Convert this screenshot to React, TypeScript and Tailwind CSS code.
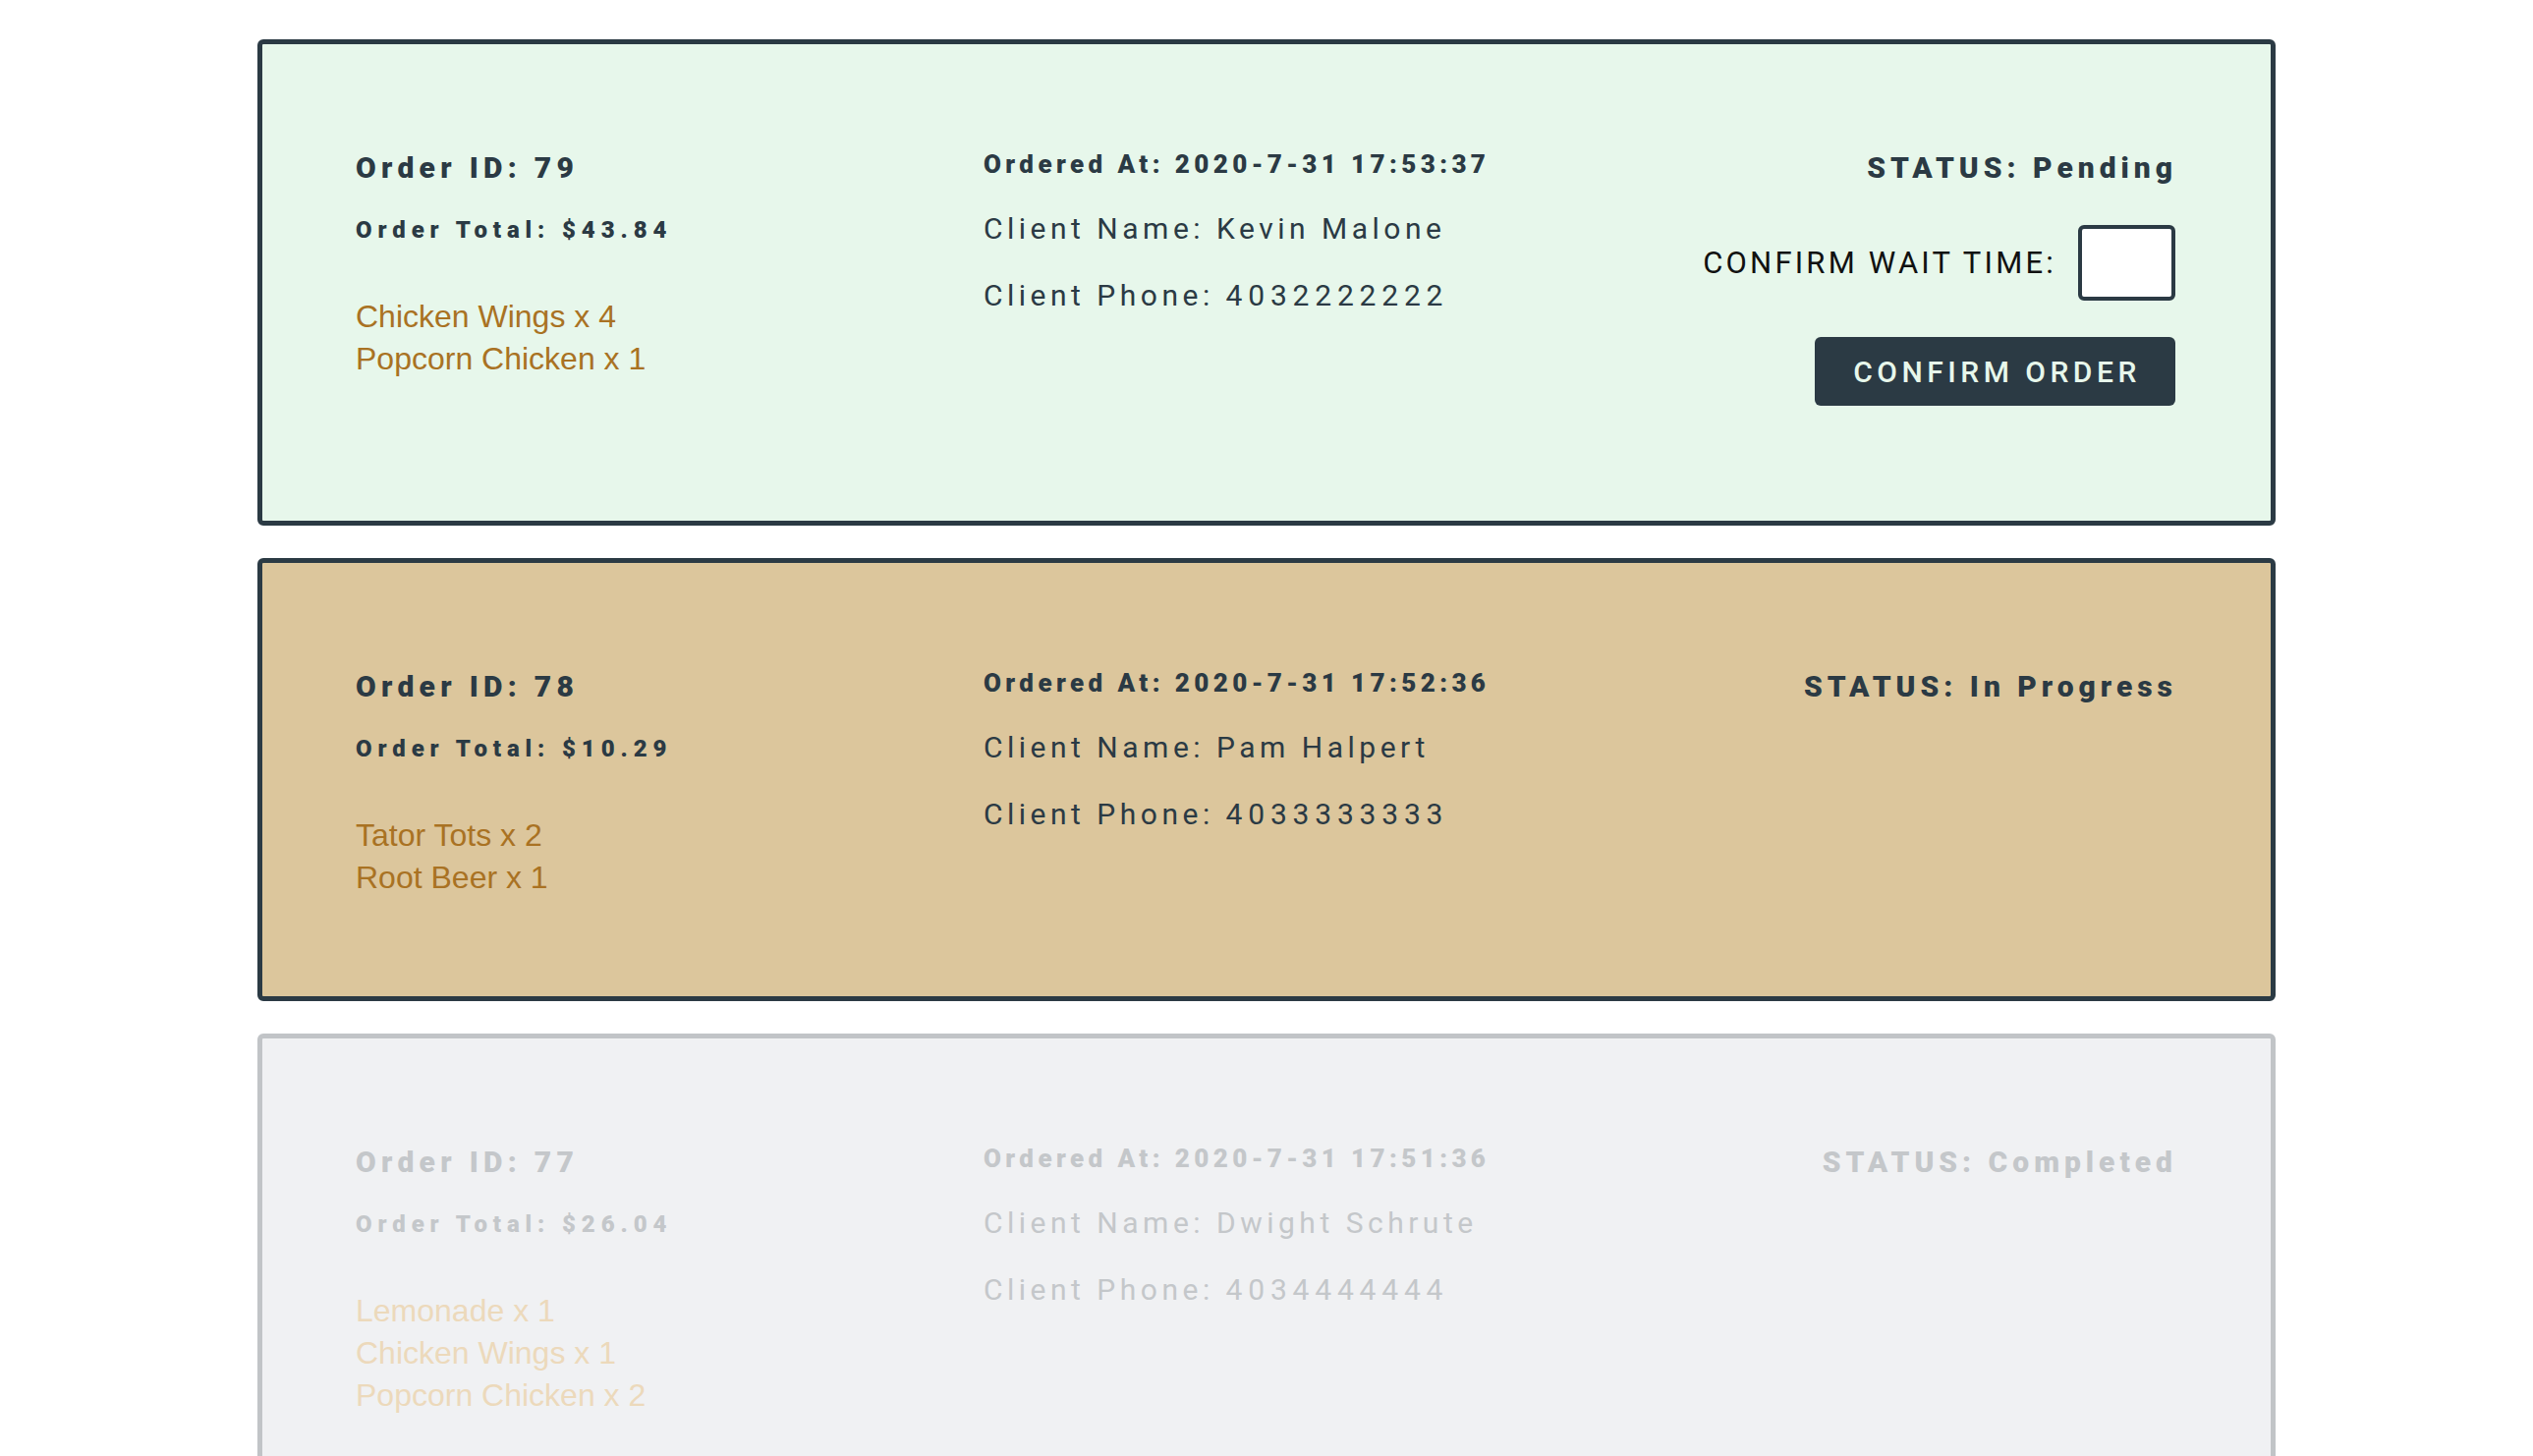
import React from "react";

type Order = {
  id: number;
  total: string;
  at: string;
  name: string;
  phone: string;
  status: string;
  items: string[];
  variant: "pending" | "progress" | "done";
};

const orders: Order[] = [
  {
    id: 79,
    total: "$43.84",
    at: "2020-7-31 17:53:37",
    name: "Kevin Malone",
    phone: "4032222222",
    status: "Pending",
    items: ["Chicken Wings x 4", "Popcorn Chicken x 1"],
    variant: "pending",
  },
  {
    id: 78,
    total: "$10.29",
    at: "2020-7-31 17:52:36",
    name: "Pam Halpert",
    phone: "4033333333",
    status: "In Progress",
    items: ["Tator Tots x 2", "Root Beer x 1"],
    variant: "progress",
  },
  {
    id: 77,
    total: "$26.04",
    at: "2020-7-31 17:51:36",
    name: "Dwight Schrute",
    phone: "4034444444",
    status: "Completed",
    items: ["Lemonade x 1", "Chicken Wings x 1", "Popcorn Chicken x 2"],
    variant: "done",
  },
];

const font = { fontFamily: "Roboto, 'Noto Sans', sans-serif" };
const itemFont = { fontFamily: "'Liberation Sans', Arial, sans-serif" };

function Card({ o }: { o: Order }) {
  const done = o.variant === "done";
  const cardCls =
    o.variant === "pending"
      ? "bg-[#e7f7eb] border-[#2b3a44]"
      : o.variant === "progress"
      ? "bg-[#dcc69c] border-[#2b3a44]"
      : "bg-[#f0f1f3] border-[#c1c4c7]";
  const textCls = done ? "text-[#c4c7ca]" : "text-[#2b3a44]";
  const itemCls = done ? "text-[#ecd9bb]" : "text-[#a97223]";

  return (
    <div
      className={`w-[2054px] mx-auto border-[5px] rounded-[6px] flex pt-[103px] pb-[99px] pl-[95px] pr-[97px] ${cardCls}`}
      style={font}
    >
      <div className="w-[639px] shrink-0 flex flex-col">
        <div className={`text-[30px] leading-[45px] font-black tracking-[5.3px] ${textCls}`}>
          Order ID: {o.id}
        </div>
        <div className={`mt-[23px] text-[24px] leading-[36px] font-black tracking-[5.9px] ${textCls}`}>
          Order Total: {o.total}
        </div>
        <div className="mt-[49px] flex flex-col" style={itemFont}>
          {o.items.map((it) => (
            <div key={it} className={`text-[32px] leading-[43px] ${itemCls}`}>
              {it}
            </div>
          ))}
        </div>
      </div>

      <div className="flex-1 flex flex-col">
        <div className={`text-[26px] leading-[39px] font-black tracking-[4.4px] ${textCls}`}>
          Ordered At: {o.at}
        </div>
        <div className={`mt-[23px] text-[30px] leading-[45px] tracking-[4.5px] ${textCls}`}>
          Client Name: {o.name}
        </div>
        <div className={`mt-[23px] text-[30px] leading-[45px] tracking-[4.5px] ${textCls}`}>
          Client Phone: <span className="tracking-[5.8px]">{o.phone}</span>
        </div>
      </div>

      <div className="flex flex-col items-end">
        <div className={`text-[30px] leading-[45px] font-black tracking-[5px] -mr-[2px] ${textCls}`}>
          STATUS: {o.status}
        </div>
        {o.variant === "pending" && (
          <>
            <div className="mt-[36px] flex items-center gap-[22px]">
              <span className="text-[31px] leading-[45px] tracking-[3.2px] text-[#111111]">
                CONFIRM WAIT TIME:
              </span>
              <input
                className="w-[99px] h-[77px] bg-white border-[4px] border-[#2b3a44] rounded-[6px] outline-none"
                type="text"
              />
            </div>
            <button className="mt-[37px] mb-[18px] w-[367px] h-[70px] bg-[#2b3a44] rounded-[6px] flex items-center justify-center text-[30px] font-medium tracking-[4.5px] text-[#e7f7eb] pl-[4px]">
              CONFIRM ORDER
            </button>
          </>
        )}
      </div>
    </div>
  );
}

export default function App() {
  return (
    <div className="min-h-screen bg-white pt-[40px] pb-[40px] flex flex-col gap-[33px]">
      {orders.map((o) => (
        <Card key={o.id} o={o} />
      ))}
    </div>
  );
}
